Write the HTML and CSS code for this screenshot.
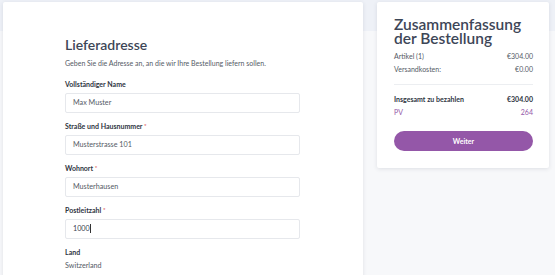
FILE: index.html
```html
<!DOCTYPE html>
<html>
<head>
<meta charset="UTF-8">
<title>Lieferadresse</title>
<link rel="stylesheet" href="styles.css">
</head>
<body>
<div class="page">
  <!-- Adressformular -->
  <div class="card address">
    <h1>Lieferadresse</h1>
    <p class="intro">Geben Sie die Adresse an, an die wir Ihre Bestellung liefern sollen.</p>
    <div class="field">
      <label>Vollständiger Name</label>
      <div class="input">Max Muster</div>
    </div>
    <div class="field">
      <label>Straße und Hausnummer <span class="req">*</span></label>
      <div class="input">Musterstrasse 101</div>
    </div>
    <div class="field">
      <label>Wohnort <span class="req">*</span></label>
      <div class="input">Musterhausen</div>
    </div>
    <div class="field">
      <label>Postleitzahl <span class="req">*</span></label>
      <div class="input dark">1000<span class="caret"></span></div>
    </div>
    <div class="field">
      <label>Land</label>
      <div class="value">Switzerland</div>
    </div>
  </div>
  <!-- Zusammenfassung -->
  <div class="card summary">
    <h2>Zusammenfassung der Bestellung</h2>
    <div class="row"><span>Artikel (1)</span><span>€304.00</span></div>
    <div class="row"><span>Versandkosten:</span><span>€0.00</span></div>
    <div class="line"></div>
    <div class="row total"><span>Insgesamt zu bezahlen</span><span>€304.00</span></div>
    <div class="row pv"><span>PV</span><span>264</span></div>
    <div class="button">Weiter</div>
  </div>
</div>
</body>
</html>
```

FILE: styles.css
```css
html, body {
	margin: 0;
	height: 100%;
}
body {
	font-family: Lato, "Noto Sans", sans-serif;
	color: #3a4150;
	background: linear-gradient(#eef1f7 0, #eef1f7 31px, #f7f8fa 31px);
	overflow: hidden;
}
.page {
	display: flex;
	align-items: flex-start;
	padding: 2px 0 0 3px;
}
.card {
	background: #fff;
	box-shadow: 0 1px 4px rgba(40, 50, 70, 0.12);
	border-radius: 2px;
}
.address {
	width: 360px;
	height: 300px;
	box-sizing: border-box;
	padding: 34px 63px 0 62px;
}
h1 {
	margin: 0;
	font-size: 14px;
	font-weight: 600;
	color: #3d4657;
	line-height: 18px;
}
.intro {
	margin: 4px 0 12px;
	font-size: 7px;
	color: #555b66;
	line-height: 10px;
}
.field label {
	display: block;
	font-size: 7px;
	font-weight: 700;
	color: #2f3542;
	line-height: 8px;
	margin-bottom: 5px;
}
.req {
	color: #e06060;
	font-size: 6px;
	vertical-align: top;
}
.input {
	height: 20px;
	box-sizing: border-box;
	border: 1px solid #e6e8ec;
	border-radius: 2px;
	padding: 0 7px;
	font-size: 7.2px;
	line-height: 18px;
	color: #555b66;
	margin-bottom: 9px;
}
.input.dark {
	color: #3a4150;
}
.caret {
	display: inline-block;
	width: 1px;
	height: 9px;
	background: #333;
	vertical-align: -2px;
}
.value {
	font-size: 7.2px;
	color: #555b66;
	line-height: 10px;
	margin-top: 5px;
}
.summary {
	width: 172px;
	margin-left: 14px;
	box-sizing: border-box;
	padding: 15px 16px 17px 17px;
}
h2 {
	margin: 0 0 5px;
	font-size: 15.5px;
	font-weight: 600;
	line-height: 14px;
	color: #3d4657;
}
.row {
	display: flex;
	justify-content: space-between;
	font-size: 7px;
	line-height: 13px;
	color: #555b66;
}
.line {
	border-top: 1px solid #eceef1;
	margin: 8px 0 8px;
}
.row.total {
	font-weight: 700;
	color: #2f3542;
}
.row.pv {
	color: #9457a8;
}
.button {
	margin-top: 12px;
	height: 20px;
	border-radius: 10px;
	background: #9457a8;
	color: #fff;
	font-size: 7px;
	font-weight: 700;
	text-align: center;
	line-height: 20px;
}
```
